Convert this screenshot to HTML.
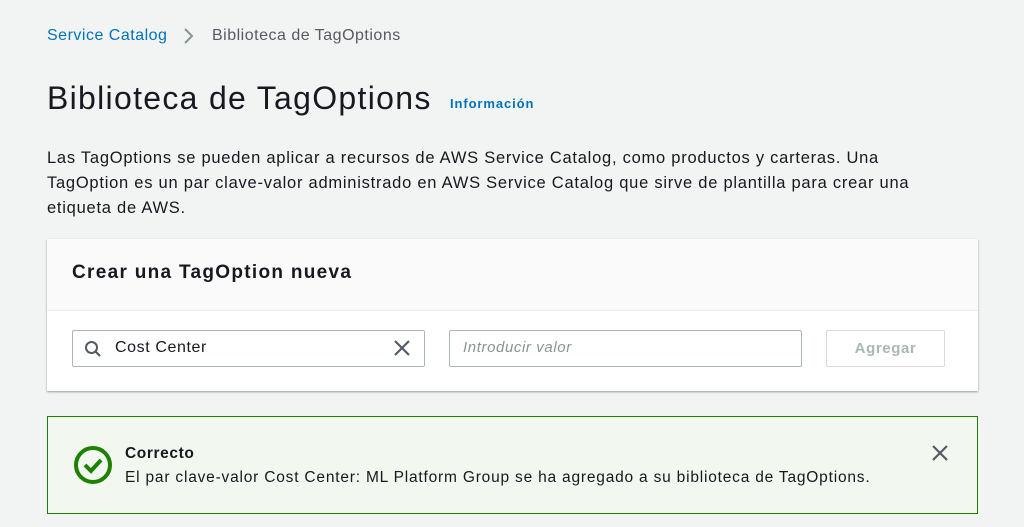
<!DOCTYPE html>
<html><head><meta charset="utf-8"><style>
*{box-sizing:border-box;margin:0;padding:0}
body{width:1024px;height:527px;overflow:hidden;background:#f2f3f3;font-family:"Liberation Sans",sans-serif;color:#16191f;position:relative}
.a{position:absolute}
</style></head><body>
<div class="a" style="left:47px;top:27px;font-size:16px;letter-spacing:0.5px;color:#0073bb">Service Catalog</div>
<svg class="a" style="left:181px;top:27px" width="14" height="18"><path d="M4 2 L11 9 L4 16" fill="none" stroke="#879596" stroke-width="2"/></svg>
<div class="a" style="left:212px;top:27px;font-size:16px;letter-spacing:0.5px;color:#545b64">Biblioteca de TagOptions</div>
<div class="a" style="left:47px;top:80px;font-size:32px;letter-spacing:1.3px;color:#16191f">Biblioteca de TagOptions</div>
<div class="a" style="left:450px;top:96px;font-size:13px;letter-spacing:0.9px;font-weight:bold;color:#0073bb">Información</div>
<div class="a" style="left:47px;top:146px;white-space:nowrap;font-size:16.5px;letter-spacing:0.75px;line-height:25px;color:#16191f">Las TagOptions se pueden aplicar a recursos de AWS Service Catalog, como productos y carteras. Una<br>TagOption es un par clave-valor administrado en AWS Service Catalog que sirve de plantilla para crear una<br>etiqueta de AWS.</div>
<div class="a" style="left:47px;top:239px;width:931px;height:152px;background:#fff;box-shadow:0 1px 2px rgba(0,28,36,.4)">
  <div style="height:72px;background:#fafafa;border-bottom:1px solid #eaeded;padding:23px 0 0 25px;font-size:19px;letter-spacing:1.3px;font-weight:bold">Crear una TagOption nueva</div>
  <div class="a" style="left:25px;top:91px;width:353px;height:37px;border:1px solid #aab7b8;border-radius:2px">
    <svg class="a" style="left:11px;top:9px" width="18" height="18"><circle cx="7.5" cy="7.5" r="5.5" fill="none" stroke="#545b64" stroke-width="2"/><path d="M11.5 11.5L16 16" stroke="#545b64" stroke-width="2.2"/></svg>
    <div class="a" style="left:42px;top:8px;font-size:16px;letter-spacing:0.6px">Cost Center</div>
    <svg class="a" style="left:320px;top:8px" width="18" height="18"><path d="M2 2L16 16M16 2L2 16" stroke="#545b64" stroke-width="2.2"/></svg>
  </div>
  <div class="a" style="left:402px;top:91px;width:353px;height:37px;border:1px solid #aab7b8;border-radius:2px;padding:8px 0 0 13px;font-size:15px;letter-spacing:0.6px;font-style:italic;color:#879596">Introducir valor</div>
  <div class="a" style="left:779px;top:91px;width:119px;height:37px;border:1px solid #d5dbdb;border-radius:2px;text-align:center;padding-top:9px;font-size:15px;letter-spacing:0.6px;font-weight:bold;color:#aab7b8">Agregar</div>
</div>
<div class="a" style="left:47px;top:416px;width:931px;height:98px;background:#f2f8f0;border:1px solid #1d8102">
  <svg class="a" style="left:25px;top:28px" width="42" height="42"><circle cx="20" cy="20" r="17" fill="none" stroke="#1d8102" stroke-width="4"/><path d="M12 20L18 26L28 15" fill="none" stroke="#1d8102" stroke-width="4"/></svg>
  <div class="a" style="left:77px;top:28px;font-size:15.5px;letter-spacing:0.6px;font-weight:bold">Correcto</div>
  <div class="a" style="left:77px;top:52px;font-size:15.5px;letter-spacing:0.8px">El par clave-valor Cost Center: ML Platform Group se ha agregado a su biblioteca de TagOptions.</div>
  <svg class="a" style="left:884px;top:28px" width="16" height="16"><path d="M1 1L15 15M15 1L1 15" stroke="#545b64" stroke-width="2.2"/></svg>
</div>
</body></html>
